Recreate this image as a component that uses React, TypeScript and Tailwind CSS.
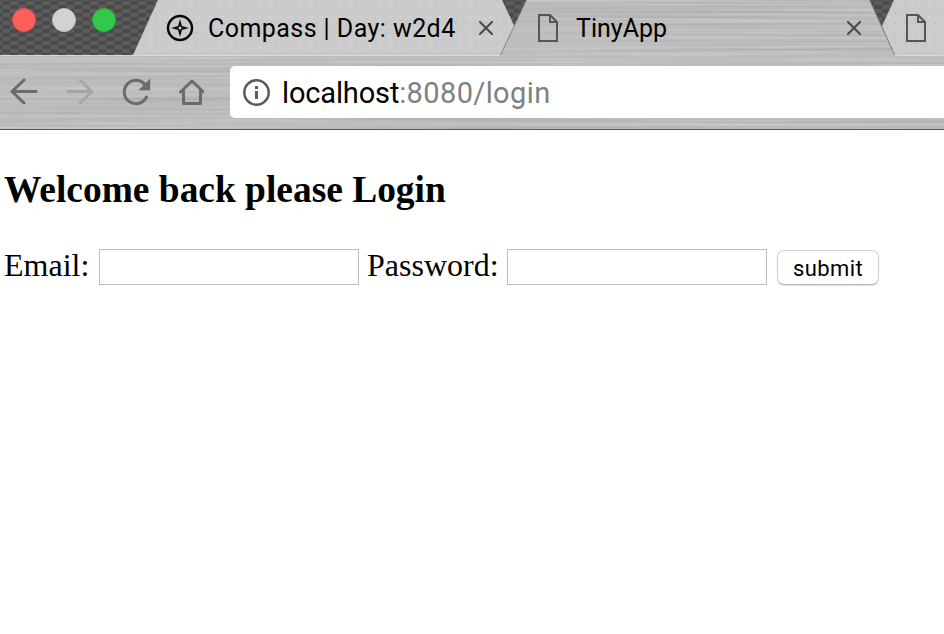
import React from "react";

function Brushed({ id, seed }: { id: string; seed: number }) {
  return (
    <svg className="absolute inset-0 h-full w-full" aria-hidden="true">
      <filter id={id} x="0" y="0" width="100%" height="100%" colorInterpolationFilters="sRGB">
        <feTurbulence type="fractalNoise" baseFrequency="0.003 0.35" numOctaves={2} seed={seed} />
        <feColorMatrix values="0.16 0 0 0 0.66  0.16 0 0 0 0.66  0.16 0 0 0 0.66  0 0 0 0 1" />
      </filter>
      <rect width="100%" height="100%" filter={`url(#${id})`} />
    </svg>
  );
}

function Carbon() {
  return (
    <svg className="absolute inset-0 h-full w-full" aria-hidden="true">
      <defs>
        <pattern id="carbon" width="16" height="8" patternUnits="userSpaceOnUse">
          <rect width="16" height="8" fill="#5c5c5c" />
          <rect x="2" y="1" width="8" height="4" fill="#4b4b4b" />
          <rect x="10" y="5" width="6" height="3" fill="#4b4b4b" />
          <rect x="0" y="5" width="2" height="3" fill="#4b4b4b" />
          <rect x="10" y="0" width="6" height="1" fill="#4b4b4b" />
          <rect x="0" y="0" width="2" height="1" fill="#4b4b4b" />
        </pattern>
      </defs>
      <rect width="100%" height="100%" fill="url(#carbon)" />
    </svg>
  );
}

function FileIcon() {
  return (
    <svg width="20" height="28" viewBox="0 0 20 28" fill="none" stroke="#555" strokeWidth="2" className="shrink-0">
      <path d="M1 1H12L19 8V27H1Z" />
      <path d="M12 1V8H19" />
    </svg>
  );
}

function Close() {
  return (
    <svg width="16" height="16" viewBox="0 0 16 16" stroke="#4c4c4c" strokeWidth="2.2" strokeLinecap="round" className="shrink-0">
      <path d="M2 2L14 14M14 2L2 14" />
    </svg>
  );
}

const dots =
  "bg-[#cbcbcb] bg-[radial-gradient(circle_at_3px_3px,#c2c2c2_0.8px,transparent_1.5px),radial-gradient(circle_at_7px_7px,#d2d2d2_0.8px,transparent_1.5px)] bg-[length:10px_10px]";

export default function App() {
  return (
    <div className="flex h-[634px] w-[944px] flex-col overflow-hidden bg-white text-black">
      <header className="relative flex h-[55px] shrink-0 overflow-hidden font-['Roboto',sans-serif] text-[25px]">
        <Carbon />
        <div className="relative flex w-[133px] shrink-0 gap-4 pl-3 pt-2">
          <span className="size-6 rounded-full border border-[#e3504b] bg-[#fd605b]" />
          <span className="size-6 rounded-full border border-[#bebebe] bg-[#d2d2d2]" />
          <span className="size-6 rounded-full border border-[#28b134] bg-[#34c84a]" />
        </div>
        <div className={`relative flex h-[55px] w-[395px] shrink-0 items-center pl-[33px] [clip-path:polygon(25px_0,369px_0,100%_100%,0_100%)] ${dots}`}>
          <svg width="28" height="28" viewBox="0 0 28 28" className="shrink-0">
            <circle cx="14" cy="14" r="12" fill="none" stroke="#0a0a0a" strokeWidth="2.5" />
            <path d="M14 5L16 12L23 14L16 16L14 23L12 16L5 14L12 12Z" fill="#111" />
            <circle cx="14" cy="14" r="1.500" fill="#ccc" />
          </svg>
          <span className="ml-[14px] w-[270px] whitespace-nowrap pt-0.5 tracking-[0.44px]">Compass | Day: w2d4</span>
          <Close />
        </div>
        <div className="relative -ml-7 flex h-[55px] w-[395px] shrink-0 items-center bg-[#858585] pl-[38px] [clip-path:polygon(26px_0,370px_0,100%_100%,0_100%)]">
          <div className="absolute inset-0 [clip-path:polygon(27px_0,369px_0,394px_100%,1px_100%)]">
            <Brushed id="metal-tab" seed={4} />
          </div>
          <div className="relative flex items-center">
            <FileIcon />
            <span className="ml-[18px] w-[270px] whitespace-nowrap pt-0.5">TinyApp</span>
            <Close />
          </div>
        </div>
        <div className={`relative -ml-[13px] flex h-[55px] w-[62px] shrink-0 items-center pl-6 [clip-path:polygon(12px_0,100%_0,100%_100%,13px_100%,0_26px)] ${dots}`}>
          <FileIcon />
        </div>
      </header>

      <nav className="relative flex h-[75px] shrink-0 items-center border-b border-[#555] pl-[10px]">
        <Brushed id="metal-bar" seed={9} />
        <div className="absolute inset-x-0 top-0 flex h-px">
          <span className="w-[500px] bg-[#dadada]" />
          <span className="w-[395px]" />
          <span className="flex-1 bg-[#dadada]" />
        </div>
        <svg width="194" height="28" viewBox="10 78 194 28" fill="none" stroke="#6b6b6b" strokeWidth="3" strokeLinecap="round" strokeLinejoin="round" className="relative shrink-0">
          <path d="M24 80L12 91.500L24 103M12 91.500H36" />
          <path d="M80 80L92 91.500L80 103M92 91.500H68" stroke="#a5a5a5" />
          <path d="M145 84.500A11.700 11.700 0 1 0 146.500 97" />
          <path d="M150.200 78.500V90.200H138.500Z" fill="#6b6b6b" stroke="none" />
          <path d="M180.500 92L192 81L203.500 92M183.500 90V103.500H200.500V90" />
        </svg>
        <div className="relative ml-[26px] flex h-[52px] flex-1 items-center rounded-l-[5px] bg-white pl-[13px]">
          <svg width="27" height="27" viewBox="0 0 27 27" className="shrink-0">
            <circle cx="13.500" cy="13.500" r="12.200" fill="none" stroke="#5a5a5a" strokeWidth="2.500" />
            <path d="M12 7H15V10H12ZM12 12H15V20H12Z" fill="#5a5a5a" />
          </svg>
          <span className="ml-3 whitespace-nowrap pt-1 font-['Roboto',sans-serif] text-[29px] tracking-[-0.15px]">
            localhost<span className="tracking-[0.38px] text-[#808080]">:8080/login</span>
          </span>
        </div>
      </nav>

      <main className="px-1 pt-[38px] font-['Liberation_Serif',serif]">
        <h3 className="text-[37.44px] font-bold leading-[44px]">Welcome back please Login</h3>
        <form className="mt-[35px] flex items-center text-[32px] leading-9" onSubmit={(e) => e.preventDefault()}>
          <label className="flex items-center">
            <span className="w-[95px] pb-1">Email:</span>
            <input aria-label="Email" className="h-9 w-[260px] border border-[#bcbcbc] bg-white px-1 outline-none" />
          </label>
          <label className="ml-2 flex items-center">
            <span className="w-[140px] pb-1">Password:</span>
            <input type="password" aria-label="Password" className="h-9 w-[260px] border border-[#bcbcbc] bg-white px-1 outline-none" />
          </label>
          <button className="ml-[10px] h-[35px] w-[102px] rounded-[7px] border border-[#d0d0d0] border-b-[#b5b5b5] bg-white pt-0.5 font-['Roboto',sans-serif] text-[22px] leading-8 tracking-[0.4px] shadow-[0_1px_1px_rgba(0,0,0,0.12)]">submit</button>
        </form>
      </main>
    </div>
  );
}
